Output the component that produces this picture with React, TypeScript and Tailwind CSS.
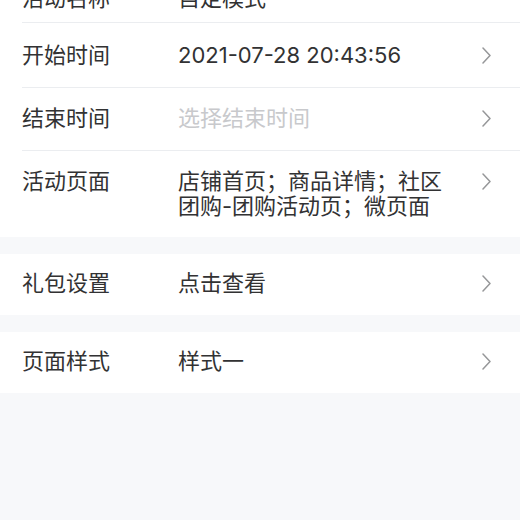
import React from "react";

const Chevron = () => (
  <svg width="9" height="17" viewBox="0 0 9 17" fill="none" className="block">
    <polyline points="1,1 8,8.5 1,16" stroke="#969799" strokeWidth="1.5" strokeLinecap="round" strokeLinejoin="round" />
  </svg>
);

export default function App() {
  const font = { fontFamily: 'Inter, "Noto Sans CJK SC", "Noto Sans", sans-serif' };
  return (
    <div className="min-h-[520px] w-[520px] overflow-hidden bg-[#f7f8fa]" style={font}>
      <div className="mt-[-31px] bg-white pl-[22px]">
        <div className="flex items-start border-b border-[#ebedf0] pt-[17px] pb-[11px]">
          <div className="w-[156px] shrink-0 text-[22px] leading-[25px] text-[#323233]">活动名称</div>
          <div className="text-[22px] leading-[25px] text-[#323233]">自定模式</div>
        </div>
        <div className="flex items-start border-b border-[#ebedf0] pt-[20px] pb-[19px] pr-[29px]">
          <div className="w-[156px] shrink-0 text-[22px] leading-[25px] text-[#323233]">开始时间</div>
          <div className="w-[272px] text-[22px] leading-[25px] text-[#323233]">2021-07-28 20:43:56</div>
          <div className="ml-auto flex h-[25px] items-center"><Chevron /></div>
        </div>
        <div className="flex items-start border-b border-[#ebedf0] pt-[18px] pb-[19px] pr-[29px]">
          <div className="w-[156px] shrink-0 text-[22px] leading-[25px] text-[#323233]">结束时间</div>
          <div className="w-[272px] text-[22px] leading-[25px] text-[#c8c9cc]">选择结束时间</div>
          <div className="ml-auto flex h-[25px] items-center"><Chevron /></div>
        </div>
        <div className="flex items-start pt-[18px] pb-[18px] pr-[29px]">
          <div className="w-[156px] shrink-0 text-[22px] leading-[25px] text-[#323233]">活动页面</div>
          <div className="w-[280px] text-[22px] leading-[25px] text-[#323233]">店铺首页；商品详情；社区团购-团购活动页；微页面</div>
          <div className="ml-auto flex h-[25px] items-center"><Chevron /></div>
        </div>
      </div>

      <div className="mt-[17px] bg-white pl-[22px]">
        <div className="flex items-start pt-[17px] pb-[19px] pr-[29px]">
          <div className="w-[156px] shrink-0 text-[22px] leading-[25px] text-[#323233]">礼包设置</div>
          <div className="w-[272px] text-[22px] leading-[25px] text-[#323233]">点击查看</div>
          <div className="ml-auto flex h-[25px] items-center"><Chevron /></div>
        </div>
      </div>

      <div className="mt-[17px] bg-white pl-[22px]">
        <div className="flex items-start pt-[17px] pb-[19px] pr-[29px]">
          <div className="w-[156px] shrink-0 text-[22px] leading-[25px] text-[#323233]">页面样式</div>
          <div className="w-[272px] text-[22px] leading-[25px] text-[#323233]">样式一</div>
          <div className="ml-auto flex h-[25px] items-center"><Chevron /></div>
        </div>
      </div>
    </div>
  );
}
